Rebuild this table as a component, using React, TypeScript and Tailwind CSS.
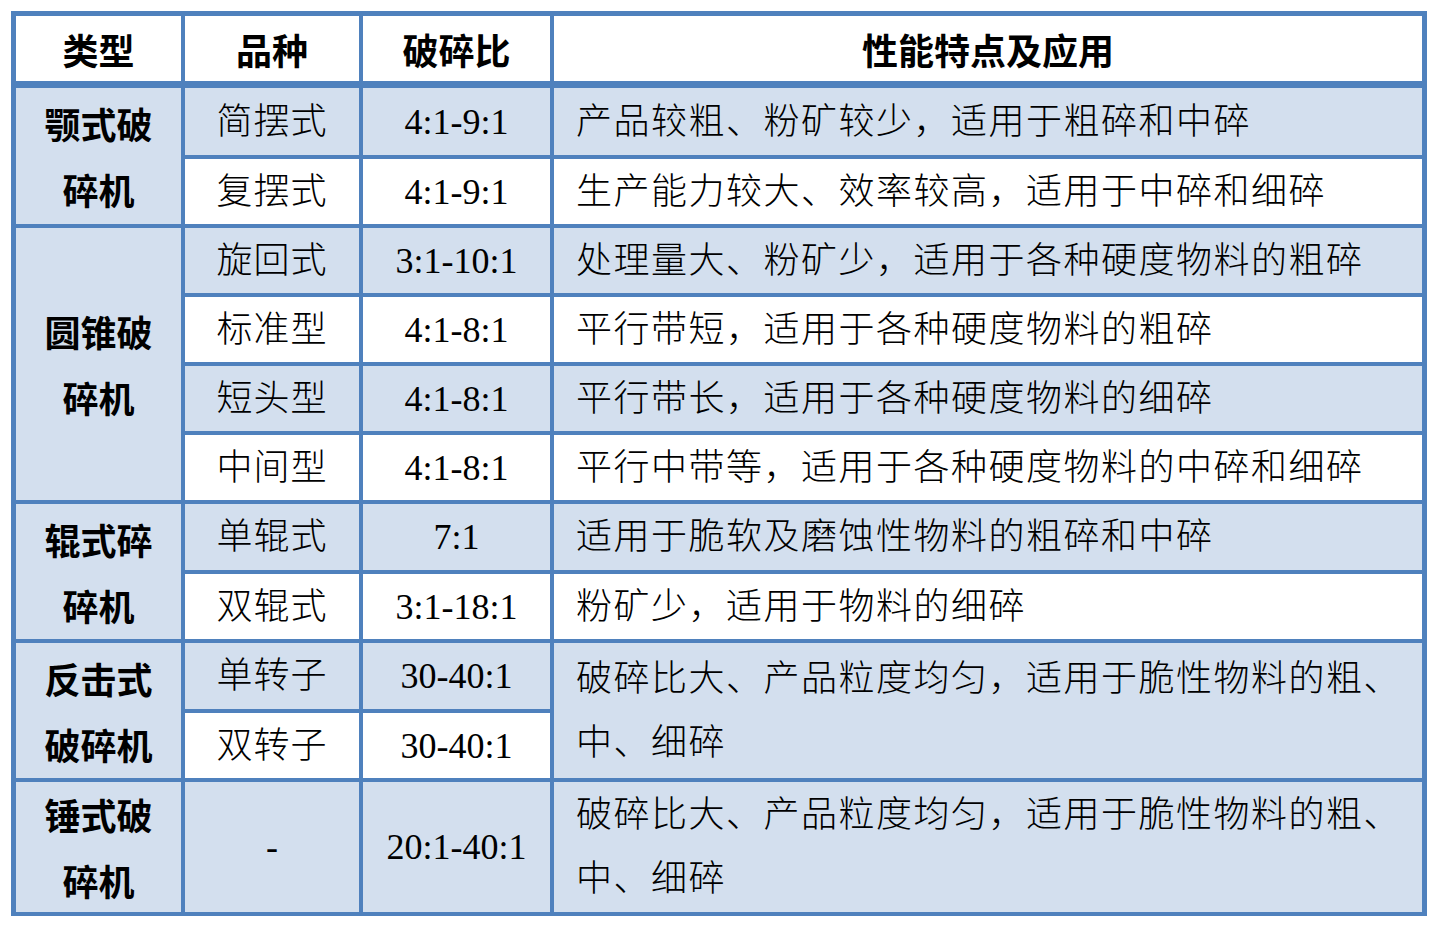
import React from "react";

const BLUE = "bg-[#d3dfee]";
const WHITE = "bg-white";
const SANS = "font-['Noto_Sans_CJK_SC',sans-serif]";
const SERIF = "font-['Liberation_Serif','Noto_Sans_CJK_SC',serif]";

type Row = { v: string; r: string; d?: string; blue: boolean };

const rows: Row[] = [
  { v: "简摆式", r: "4:1-9:1", d: "产品较粗、粉矿较少，适用于粗碎和中碎", blue: true },
  { v: "复摆式", r: "4:1-9:1", d: "生产能力较大、效率较高，适用于中碎和细碎", blue: false },
  { v: "旋回式", r: "3:1-10:1", d: "处理量大、粉矿少，适用于各种硬度物料的粗碎", blue: true },
  { v: "标准型", r: "4:1-8:1", d: "平行带短，适用于各种硬度物料的粗碎", blue: false },
  { v: "短头型", r: "4:1-8:1", d: "平行带长，适用于各种硬度物料的细碎", blue: true },
  { v: "中间型", r: "4:1-8:1", d: "平行中带等，适用于各种硬度物料的中碎和细碎", blue: false },
  { v: "单辊式", r: "7:1", d: "适用于脆软及磨蚀性物料的粗碎和中碎", blue: true },
  { v: "双辊式", r: "3:1-18:1", d: "粉矿少，适用于物料的细碎", blue: false },
  { v: "单转子", r: "30-40:1", blue: true },
  { v: "双转子", r: "30-40:1", blue: false },
];

const rowStart = [
  "row-start-2",
  "row-start-3",
  "row-start-4",
  "row-start-5",
  "row-start-6",
  "row-start-7",
  "row-start-8",
  "row-start-9",
  "row-start-10",
  "row-start-11",
];

const headers = [
  { t: "类型", c: "col-start-1" },
  { t: "品种", c: "col-start-2" },
  { t: "破碎比", c: "col-start-3" },
  { t: "性能特点及应用", c: "col-start-4" },
];

function Type({ cls, a, b }: { cls: string; a: string; b: string }) {
  return (
    <div
      className={`col-start-1 ${cls} ${BLUE} ${SANS} flex flex-col items-center justify-center text-[36px] leading-[66px] font-bold text-black`}
    >
      <span>{a}</span>
      <span>{b}</span>
    </div>
  );
}

function TwoLine({ cls }: { cls: string }) {
  return (
    <div
      className={`col-start-4 ${cls} ${BLUE} ${SERIF} flex flex-col justify-center pl-[22px] text-[36px] leading-[64px] font-light text-black tracking-[1.5px] whitespace-nowrap`}
    >
      <span>破碎比大、产品粒度均匀，适用于脆性物料的粗、</span>
      <span>中、细碎</span>
    </div>
  );
}

export default function App() {
  return (
    <div className="w-[1438px] h-[925px] bg-white pt-[11px] pl-[11px]">
      <div className="inline-grid grid-cols-[165px_174px_187px_868px] grid-rows-[68px_67px_65px_65px_65px_65px_65px_66px_65px_66px_65px_63px_63px] gap-[4px] bg-[#4f81bd] pt-[5px] px-[5px] pb-[4px]">
        {headers.map((h) => (
          <div
            key={h.t}
            className={`${h.c} row-start-1 h-[65px] ${WHITE} ${SANS} flex items-center justify-center text-[36px] font-bold text-black`}
          >
            {h.t}
          </div>
        ))}

        <Type cls="row-start-2 row-span-2" a="颚式破" b="碎机" />
        <Type cls="row-start-4 row-span-4" a="圆锥破" b="碎机" />
        <Type cls="row-start-8 row-span-2" a="辊式碎" b="碎机" />
        <Type cls="row-start-10 row-span-2" a="反击式" b="破碎机" />
        <Type cls="row-start-12 row-span-2" a="锤式破" b="碎机" />

        {rows.map((r, i) => (
          <React.Fragment key={i}>
            <div
              className={`col-start-2 ${rowStart[i]} ${r.blue ? BLUE : WHITE} ${SERIF} flex items-center justify-center text-[36px] font-light text-black tracking-[1px]`}
            >
              {r.v}
            </div>
            <div
              className={`col-start-3 ${rowStart[i]} ${r.blue ? BLUE : WHITE} ${SERIF} flex items-center justify-center text-[36px] text-black`}
            >
              {r.r}
            </div>
            {r.d && (
              <div
                className={`col-start-4 ${rowStart[i]} ${r.blue ? BLUE : WHITE} ${SERIF} flex items-center pl-[22px] text-[36px] font-light text-black tracking-[1.5px] whitespace-nowrap`}
              >
                {r.d}
              </div>
            )}
          </React.Fragment>
        ))}

        <TwoLine cls="row-start-10 row-span-2" />

        <div
          className={`col-start-2 row-start-12 row-span-2 ${BLUE} ${SERIF} flex items-center justify-center text-[36px] text-black`}
        >
          -
        </div>
        <div
          className={`col-start-3 row-start-12 row-span-2 ${BLUE} ${SERIF} flex items-center justify-center text-[36px] text-black`}
        >
          20:1-40:1
        </div>
        <TwoLine cls="row-start-12 row-span-2" />
      </div>
    </div>
  );
}
